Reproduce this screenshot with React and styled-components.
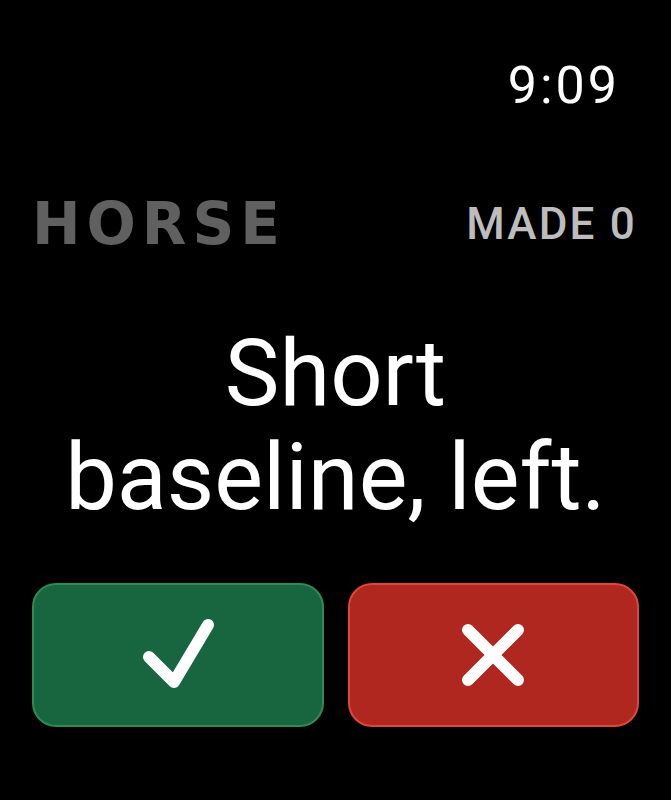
import React from "react";
import styled, { createGlobalStyle } from "styled-components";

const Global = createGlobalStyle`
  html, body { margin: 0; padding: 0; background: #000; }
  body { font-family: Roboto, "Liberation Sans", sans-serif; -webkit-font-smoothing: antialiased; }
`;

const Screen = styled.div`
  width: 671px;
  height: 800px;
  background: #000;
  color: #fff;
  display: flex;
  flex-direction: column;
  box-sizing: border-box;
  padding: 60px 32px 0;
`;

const StatusBar = styled.div`
  display: flex;
  justify-content: flex-end;
  padding-right: 19px;
`;

const Clock = styled.div`
  font-size: 52px;
  line-height: 52px;
  font-weight: 400;
  letter-spacing: 3px;
  color: #fff;
`;

const ScoreRow = styled.div`
  margin-top: 82px;
  height: 60px;
  display: flex;
  align-items: center;
  justify-content: space-between;
`;

const Title = styled.div`
  font-family: "DejaVu Sans", Roboto, sans-serif;
  font-size: 58px;
  line-height: 60px;
  font-weight: 700;
  letter-spacing: 6px;
  color: #606060;
`;

const Score = styled.div`
  font-size: 44px;
  line-height: 42px;
  font-weight: 500;
  letter-spacing: 2.2px;
  color: #bdbdbd;
  margin-right: 2px;
`;

const Prompt = styled.div`
  margin-top: 68px;
  font-size: 92px;
  line-height: 104px;
  font-weight: 400;
  text-align: center;
  color: #fff;
`;

const Actions = styled.div`
  margin-top: 53px;
  display: grid;
  grid-template-columns: 1fr 1fr;
  gap: 24px;
`;

const ActionButton = styled.button`
  height: 144px;
  border-radius: 24px;
  border: 2px solid ${(p) => p.$edge};
  background: ${(p) => p.$fill};
  display: flex;
  align-items: center;
  justify-content: center;
  padding: 0;
  cursor: pointer;
`;

export default function App() {
  return (
    <>
      <Global />
      <Screen>
        <StatusBar>
          <Clock>9:09</Clock>
        </StatusBar>
        <ScoreRow>
          <Title>HORSE</Title>
          <Score>MADE 0</Score>
        </ScoreRow>
        <Prompt>
          Short
          <br />
          baseline, left.
        </Prompt>
        <Actions>
          <ActionButton $fill="#17663f" $edge="#2e8b54" aria-label="Made">
            <svg width="80" height="80" viewBox="0 0 80 80">
              <path
                d="M13 45 L38 70 L72 13"
                transform="translate(-2 -3)"
                fill="none"
                stroke="#fff"
                strokeWidth="12"
                strokeLinecap="round"
                strokeLinejoin="round"
              />
            </svg>
          </ActionButton>
          <ActionButton $fill="#b0271f" $edge="#e0473a" aria-label="Missed">
            <svg width="80" height="80" viewBox="0 0 80 80">
              <path
                d="M15 15 L65 65 M65 15 L15 65"
                fill="none"
                stroke="#fff"
                strokeWidth="12"
                strokeLinecap="round"
              />
            </svg>
          </ActionButton>
        </Actions>
      </Screen>
    </>
  );
}
